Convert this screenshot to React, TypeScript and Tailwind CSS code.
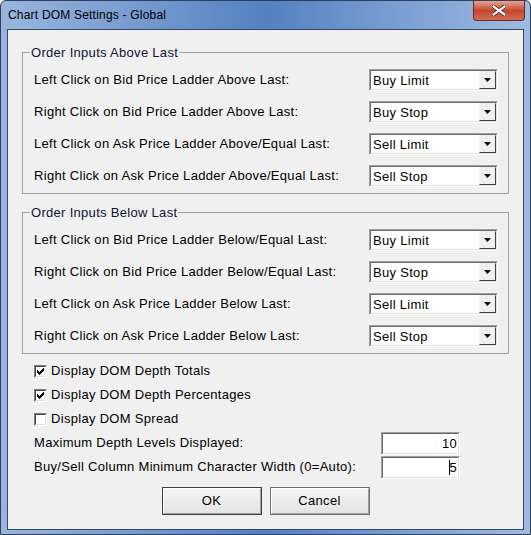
import React from 'react'

const font = { fontFamily: '"Liberation Sans", Arial, sans-serif' }

const above = [
    { label: 'Left Click on Bid Price Ladder Above Last:', value: 'Buy Limit' },
    { label: 'Right Click on Bid Price Ladder Above Last:', value: 'Buy Stop' },
    { label: 'Left Click on Ask Price Ladder Above/Equal Last:', value: 'Sell Limit' },
    { label: 'Right Click on Ask Price Ladder Above/Equal Last:', value: 'Sell Stop' },
]

const below = [
    { label: 'Left Click on Bid Price Ladder Below/Equal Last:', value: 'Buy Limit' },
    { label: 'Right Click on Bid Price Ladder Below/Equal Last:', value: 'Buy Stop' },
    { label: 'Left Click on Ask Price Ladder Below Last:', value: 'Sell Limit' },
    { label: 'Right Click on Ask Price Ladder Below Last:', value: 'Sell Stop' },
]

function Combo({ value }: { value: string }) {
    return (
        <div className="w-[129px] h-[22px] border border-t-[#a0a0a0] border-l-[#a0a0a0] border-r-white border-b-white">
            <div className="h-full border border-t-[#696969] border-l-[#696969] border-r-[#e3e3e3] border-b-[#e3e3e3] bg-white flex items-center justify-between">
                <span className="pl-[2px] text-[13px] tracking-[0.3px] text-black leading-none">{value}</span>
                <div className="w-[17px] h-[18px] bg-[#f0f0f0] border border-t-[#f0f0f0] border-l-[#f0f0f0] border-r-[#404040] border-b-[#404040] flex items-center justify-center">
                    <svg width="7" height="4" viewBox="0 0 7 4">
                        <path d="M0 0 H7 L3.5 4 Z" fill="#000" />
                    </svg>
                </div>
            </div>
        </div>
    )
}

function Group({ title, rows }: { title: string; rows: { label: string; value: string }[] }) {
    return (
        <fieldset className="border border-[#a0a0a0] mx-[14px] pl-[11px] pr-[10px] pt-[9px] pb-[6px]">
            <legend className="-ml-[4px] px-[1px] text-[13px] leading-[15px] tracking-[0.3px] text-[#10103a]">{title}</legend>
            <div className="flex flex-col gap-[10px]">
                {rows.map((r, i) => (
                    <div key={i} className="flex items-center justify-between h-[22px]">
                        <span className="text-[13px] tracking-[0.3px] text-black">{r.label}</span>
                        <Combo value={r.value} />
                    </div>
                ))}
            </div>
        </fieldset>
    )
}

function Check({ checked, label }: { checked: boolean; label: string }) {
    return (
        <div className="h-[24px] flex items-center gap-[4px]">
            <div className="w-[13px] h-[13px] border border-t-[#808080] border-l-[#808080] border-r-white border-b-white">
                <div className="w-full h-full border border-t-[#404040] border-l-[#404040] border-r-[#e3e3e3] border-b-[#e3e3e3] bg-white flex items-center justify-center">
                    {checked && (
                        <svg width="7" height="7" viewBox="0 0 7 7" shapeRendering="crispEdges">
                            <path d="M0 2 h1 v1 h1 v1 h1 v-1 h1 v-1 h1 v-1 h1 v-1 h1 v3 h-1 v1 h-1 v1 h-1 v1 h-1 v1 h-1 v-1 h-1 v-1 h-1 v-1 h-1 Z" fill="#000" />
                        </svg>
                    )}
                </div>
            </div>
            <span className="text-[13px] tracking-[0.3px] text-black">{label}</span>
        </div>
    )
}

function NumBox({ value, caret }: { value: string; caret?: boolean }) {
    return (
        <div className="w-[79px] h-[23px] border border-t-[#a0a0a0] border-l-[#a0a0a0] border-r-white border-b-white">
            <div className="h-full border border-t-[#696969] border-l-[#696969] border-r-[#e3e3e3] border-b-[#e3e3e3] bg-white flex items-center justify-end pr-[1px]">
                {caret && <div className="w-[1px] h-[15px] bg-black -mr-[1px]"></div>}
                <span className="text-[13px] tracking-[0.3px] text-black leading-none">{value}</span>
            </div>
        </div>
    )
}

function Btn({ label, primary }: { label: string; primary?: boolean }) {
    return (
        <div className={"w-[100px] h-[28px] border " + (primary ? "border-[#404040]" : "border-[#707070]")}>
            <div className="h-full border border-t-white border-l-white border-r-[#a0a0a0] border-b-[#a0a0a0] bg-gradient-to-b from-[#f4f4f4] to-[#e4e4e4] flex items-center justify-center">
                <span className="text-[13px] tracking-[0.3px] text-black">{label}</span>
            </div>
        </div>
    )
}

export default function App() {
    return (
        <div style={font} className="w-[531px] h-[535px] flex flex-col bg-gradient-to-r from-[#9ab6dd] via-[#5481c2] to-[#9fbbe2] rounded-t-[6px] border border-[#2f3f5e]">
            <div className="h-[28px] flex items-start justify-between">
                <div className="pl-[7px] h-full flex items-center text-[12px] tracking-[0.2px] text-black">Chart DOM Settings - Global</div>
                <div className="mr-[5px] w-[52px] h-[20px] rounded-b-[4px] border border-t-0 border-[#6e2a22] bg-gradient-to-b from-[#e6a391] via-[#c7462f] to-[#d06a4f] flex items-center justify-center">
                    <svg width="14" height="11" viewBox="0 0 14 11">
                        <path d="M1 1 L13 10 M13 1 L1 10" stroke="#3a1a14" strokeWidth="3.6" strokeLinecap="square" />
                        <path d="M1.5 1.5 L12.5 9.5 M12.5 1.5 L1.5 9.5" stroke="#fff" strokeWidth="2.2" strokeLinecap="square" />
                    </svg>
                </div>
            </div>
            <div className="mx-[6px] mb-[4px] flex-1 border border-[#34476a] bg-[#f0f0f0] flex flex-col">
                <div className="h-[15px]"></div>
                <Group title="Order Inputs Above Last" rows={above} />
                <div className="h-[11px]"></div>
                <Group title="Order Inputs Below Last" rows={below} />
                <div className="pl-[26px] pt-[5px] flex flex-col">
                    <Check checked label="Display DOM Depth Totals" />
                    <Check checked label="Display DOM Depth Percentages" />
                    <Check checked={false} label="Display DOM Spread" />
                    <div className="h-[24px] flex items-center">
                        <span className="w-[347px] text-[13px] tracking-[0.3px] text-black">Maximum Depth Levels Displayed:</span>
                        <NumBox value="10" />
                    </div>
                    <div className="h-[24px] flex items-center">
                        <span className="w-[347px] text-[13px] tracking-[0.3px] text-black">Buy/Sell Column Minimum Character Width (0=Auto):</span>
                        <NumBox value="5" caret />
                    </div>
                </div>
                <div className="mt-[8px] flex justify-center gap-[8px]">
                    <Btn label="OK" primary />
                    <Btn label="Cancel" />
                </div>
            </div>
        </div>
    )
}
